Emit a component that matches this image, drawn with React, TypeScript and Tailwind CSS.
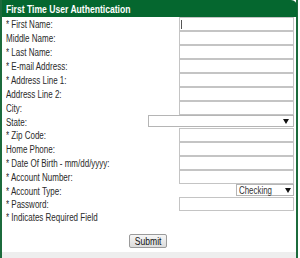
import React from "react";

const FONT = { fontFamily: "'Liberation Sans', Arial, sans-serif" };

type Row = { label: string; kind: "input" | "state" | "type"; h: string; focus?: boolean };

const ROWS: Row[] = [
  { label: "* First Name:", kind: "input", h: "h-[14px]", focus: true },
  { label: "Middle Name:", kind: "input", h: "h-[14px]" },
  { label: "* Last Name:", kind: "input", h: "h-[14px]" },
  { label: "* E-mail Address:", kind: "input", h: "h-[14px]" },
  { label: "* Address Line 1:", kind: "input", h: "h-[14px]" },
  { label: "Address Line 2:", kind: "input", h: "h-[14px]" },
  { label: "City:", kind: "input", h: "h-[14px]" },
  { label: "State:", kind: "state", h: "h-[13px]" },
  { label: "* Zip Code:", kind: "input", h: "h-[14px]" },
  { label: "Home Phone:", kind: "input", h: "h-[14px]" },
  { label: "* Date Of Birth - mm/dd/yyyy:", kind: "input", h: "h-[14px]" },
  { label: "* Account Number:", kind: "input", h: "h-[14px]" },
  { label: "* Account Type:", kind: "type", h: "h-[13px]" },
  { label: "* Password:", kind: "input", h: "h-[14px]" },
];

function Arrow() {
  return (
    <svg width="6" height="5" viewBox="0 0 6 5" className="shrink-0">
      <path d="M0 0h6L3 5z" fill="#111" />
    </svg>
  );
}

function Control({ row }: { row: Row }) {
  if (row.kind === "state") {
    return (
      <div className="w-[146px] h-[12px] self-start border border-[#b5b5b5] bg-white flex items-center justify-end pr-[4px]">
        <Arrow />
      </div>
    );
  }
  if (row.kind === "type") {
    return (
      <div className="w-[58px] h-[12px] self-start border border-[#b5b5b5] bg-white flex items-center justify-between pl-[2px] pr-[4px] leading-none">
        <span className="inline-block origin-left scale-x-[0.72] whitespace-nowrap text-[11px] text-[#333] pt-[1px]">Checking</span>
        <Arrow />
      </div>
    );
  }
  return (
    <div className="relative w-[115px] h-[14px] border border-[#c4c4c4] bg-white">
      {row.focus && <div className="absolute left-[1px] top-[2px] w-[1px] h-[9px] bg-[#555]" />}
    </div>
  );
}

export default function App() {
  return (
    <div className="w-[300px] h-[258px] bg-white overflow-hidden" style={FONT}>
      <div className="w-[298px] h-[258px] border-l-2 border-r-2 border-[#1c6b3c] flex flex-col">
        {/* Header */}
        <div className="h-[17px] shrink-0 bg-[#05672f] rounded-tr-[6px] -mr-[1px] flex items-center pl-[4px] pt-[1px]">
          <span className="inline-block origin-left scale-x-[0.78] whitespace-nowrap text-white font-bold text-[11px] leading-none">
            First Time User Authentication
          </span>
        </div>

        {/* Fields */}
        <div className="flex flex-col pl-[4px] pr-[2px]">
          {ROWS.map((row) => (
            <div key={row.label} className={`${row.h} flex items-center justify-between`}>
              <span className="inline-block origin-left scale-x-[0.8] whitespace-nowrap text-[10px] leading-none text-[#2a2a2a] pt-[2px]">
                {row.label}
              </span>
              <Control row={row} />
            </div>
          ))}
          <div className="h-[12px] flex items-center">
            <span className="inline-block origin-left scale-x-[0.8] whitespace-nowrap text-[10px] leading-none text-[#2a2a2a] pt-[2px]">
              * Indicates Required Field
            </span>
          </div>
        </div>

        <div className="flex justify-center pt-[11px]">
          <button className="w-[38px] h-[14px] border border-[#9a9a9a] rounded-[2px] bg-gradient-to-b from-[#f6f6f6] to-[#dcdcdc] leading-none text-[#111] -ml-[2px] flex items-center justify-center">
            <span className="inline-block scale-x-[0.78] text-[11px]">Submit</span>
          </button>
        </div>

        <div className="mt-auto h-[6px] bg-[#eeeeee]" />
      </div>
    </div>
  );
}
